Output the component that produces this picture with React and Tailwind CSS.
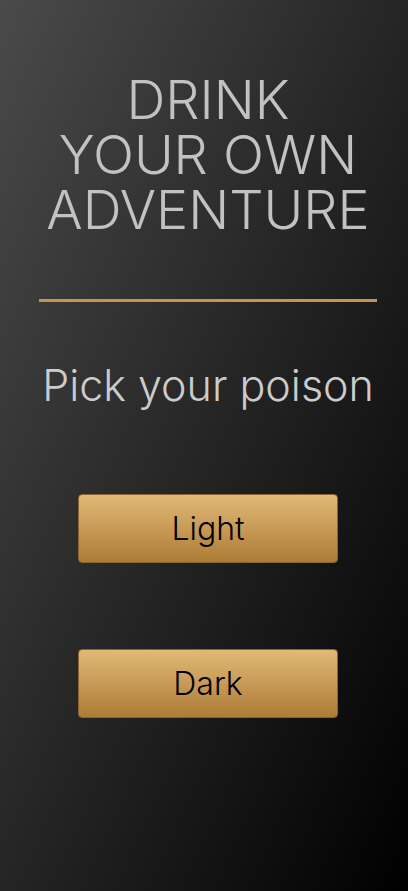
export default function App() {
  return (
    <div
      className="min-h-[891px] w-full bg-[linear-gradient(to_bottom_right,#4a4a4a,#000000)] pl-2"
      style={{ fontFamily: "Inter, 'Noto Sans', sans-serif" }}
    >
      <div className="flex flex-col items-center pt-[72px]">
        <h1 className="text-center text-[54px] font-light leading-[55px] text-[#c2c2c2]">
          <span className="block">DRINK</span>
          <span className="block">YOUR OWN</span>
          <span className="block">ADVENTURE</span>
        </h1>

        <div className="mt-[62px] h-[3px] w-[338px] bg-[#c5954f]" />

        <p className="mt-[62px] text-[43px] font-light leading-none text-[#cccccc]">
          Pick your poison
        </p>

        <button className="mt-[87px] h-[69px] w-[260px] rounded-[4px] border border-[#8a6530] bg-gradient-to-b from-[#e2b977] to-[#ad7c35] text-[32px] font-light text-black">
          Light
        </button>

        <button className="mt-[86px] h-[69px] w-[260px] rounded-[4px] border border-[#8a6530] bg-gradient-to-b from-[#e2b977] to-[#ad7c35] text-[32px] font-light text-black">
          Dark
        </button>
      </div>
    </div>
  );
}
